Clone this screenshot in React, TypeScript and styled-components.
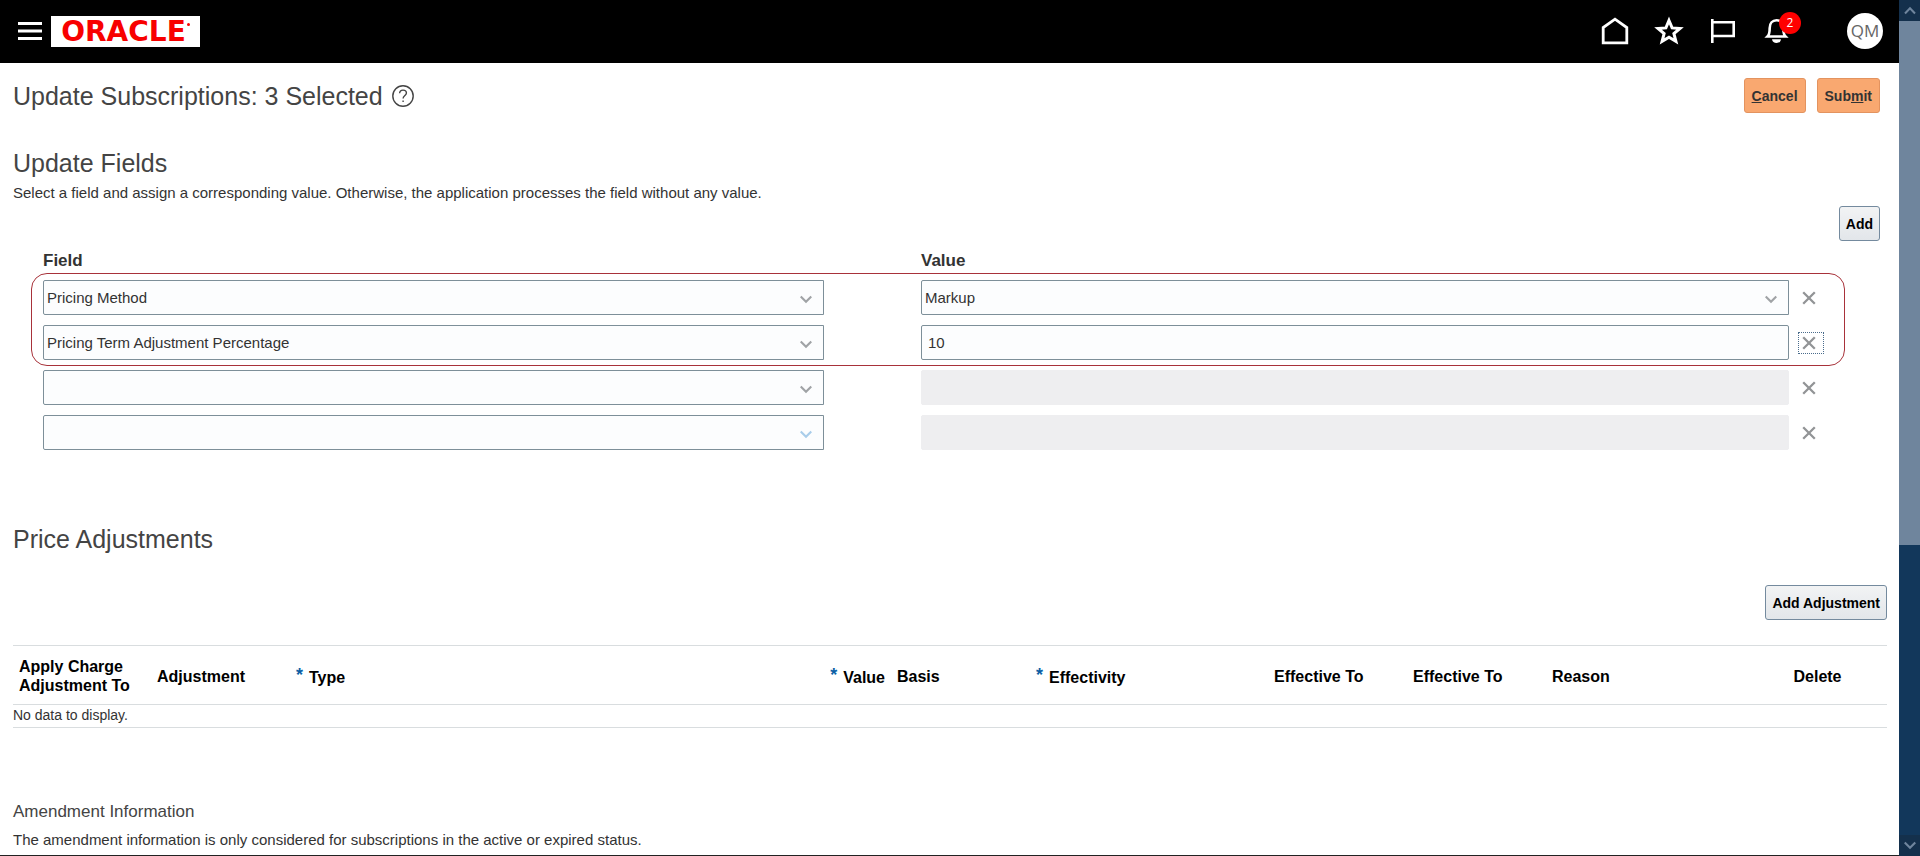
import React from 'react';
import styled, { createGlobalStyle } from 'styled-components';

const GlobalStyle = createGlobalStyle`
  * { box-sizing: border-box; }
  body {
    margin: 0;
    background: #fff;
    color: #333;
    font: 14px/20px "Liberation Sans", Arial, sans-serif;
  }
`;

const Shell = styled.div`
  display: grid;
  grid-template-columns: minmax(0, 1fr) 21px;
  height: 100vh;
  overflow: hidden;
`;

const Page = styled.div`
  min-height: 0;
  overflow: hidden;
  border-bottom: 1px solid #222;
`;

const Header = styled.header`
  display: flex;
  align-items: center;
  height: 63px;
  padding: 0 16px 1px;
  background: #000;
`;

const BareButton = styled.button`
  display: flex;
  align-items: center;
  justify-content: center;
  padding: 0;
  border: 0;
  background: none;
  cursor: pointer;
`;

const MenuButton = styled(BareButton)`
  width: 28px;
  height: 28px;
`;

const Logo = styled.a`
  display: flex;
  align-items: center;
  justify-content: center;
  width: 149px;
  height: 31px;
  margin-left: 7px;
  background: #fff;
  color: #f80000;
  font: bold 28px/31px "DejaVu Sans", Verdana, sans-serif;
  text-decoration: none;
`;

const LogoMark = styled.i`
  align-self: flex-start;
  width: 3px;
  height: 3px;
  margin: 7px 0 0 1px;
  border-radius: 50%;
  background: currentColor;
`;

const Tools = styled.nav`
  display: flex;
  align-items: center;
  gap: 22px;
  margin-left: auto;
`;

const ToolButton = styled(BareButton)`
  position: relative;
  width: 32px;
  height: 32px;
`;

const Badge = styled.span`
  position: absolute;
  top: -3px;
  left: 18px;
  width: 22px;
  height: 22px;
  border-radius: 50%;
  background: #f00;
  color: #fff;
  font: 12px/22px "Open Sans", sans-serif;
  text-align: center;
`;

const Avatar = styled(BareButton)`
  width: 36px;
  height: 36px;
  margin-left: 32px;
  border-radius: 50%;
  background: #fff;
  color: #666;
  font: 17px/36px "Open Sans", sans-serif;
`;

const Main = styled.main`
  padding: 15px 12px 0 13px;
`;

const TitleBar = styled.div`
  display: flex;
  align-items: center;
  gap: 9px;
  padding-right: 7px;
`;

const Heading = styled.h2`
  margin: 0;
  color: #444;
  font-size: 25px;
  font-weight: normal;
  line-height: 32px;
`;

const SubHeading = styled.h3`
  margin: 0;
  color: #444;
  font-size: 17px;
  font-weight: normal;
  line-height: 28px;
`;

const Text = styled.p`
  margin: 0;
  padding: 4px 0 3px;
  font-size: 15px;
`;

const Actions = styled.div<{ $inset?: boolean; $top?: number }>`
  display: flex;
  justify-content: flex-end;
  gap: 11px;
  margin-top: ${(p) => p.$top ?? 0}px;
  margin-left: auto;
  padding-right: ${(p) => (p.$inset ? '7px' : '0')};
`;

const Button = styled.button<{ $accent?: boolean }>`
  height: 35px;
  padding: 0 ${(p) => (p.$accent ? '7px' : '6px')};
  border: 1px solid ${(p) => (p.$accent ? '#e3935f' : '#748a9e')};
  border-radius: 3px;
  background: ${(p) => (p.$accent ? '#f9a870' : 'linear-gradient(#f2f3f4, #e2e6ea)')};
  color: ${(p) => (p.$accent ? '#333' : '#000')};
  font: bold 14px/20px "Liberation Sans", Arial, sans-serif;
  cursor: pointer;
`;

const Section = styled.section<{ $gap: number }>`
  margin-top: ${(p) => p.$gap}px;
`;

const Fields = styled.div`
  margin: 8px 42px 0 18px;
`;

const FieldRow = styled.div`
  display: grid;
  grid-template-columns: minmax(0, 781fr) minmax(0, 956fr) 26px;
  column-gap: 9px;
  align-items: center;

  & > :nth-child(2) {
    margin-left: 88px;
  }
`;

const LabelRow = styled(FieldRow)`
  padding: 0 21px 0 12px;
  font-size: 17px;
  font-weight: bold;
  line-height: 24px;
`;

const Highlight = styled.div`
  display: grid;
  row-gap: 10px;
  padding: 6px 20px 5px 11px;
  border: 1px solid #a8323a;
  border-radius: 16px;
`;

const PlainRows = styled.div`
  display: grid;
  row-gap: 10px;
  padding: 4px 21px 0 12px;
`;

const SelectBox = styled.div`
  position: relative;

  svg {
    position: absolute;
    top: 15px;
    right: 12px;
    pointer-events: none;
  }
`;

const Select = styled.select`
  display: block;
  width: 100%;
  height: 35px;
  padding: 0 32px 0 3px;
  border: 1px solid #7d8f99;
  border-radius: 2px 0 0 2px;
  background: #fcfdfe;
  color: #333;
  font: 15px/20px "Liberation Sans", Arial, sans-serif;
  appearance: none;
`;

const Input = styled.input`
  display: block;
  min-width: 0;
  height: 35px;
  padding: 0 6px;
  border: 1px solid #7d8f99;
  border-radius: 2px;
  background: #fcfdfe;
  color: #333;
  font: 15px/20px "Liberation Sans", Arial, sans-serif;

  &:disabled {
    border-color: #eeeef0;
    background: #eeeef0;
  }
`;

const RemoveButton = styled(BareButton)<{ $focused?: boolean }>`
  justify-content: flex-start;
  width: 26px;
  height: 22px;
  padding-left: 3px;
  border: 1px dotted ${(p) => (p.$focused ? '#4a6c8c' : 'transparent')};
`;

const Table = styled.table`
  width: 100%;
  margin-top: 25px;
  border-collapse: collapse;
  table-layout: fixed;
  border-top: 1px solid #d9dddf;

  th, td {
    border-bottom: 1px solid #d9dddf;
    text-align: left;
  }

  td {
    height: 23px;
    padding: 0;
    line-height: 20px;
    vertical-align: top;
  }
`;

const Th = styled.th<{ $align?: string }>`
  && {
    height: 59px;
    padding: 2px 6px 0;
    color: #000;
    font-size: 16px;
    line-height: 19px;
    text-align: ${(p) => p.$align ?? 'left'};
  }
`;

const Required = styled.span`
  margin-right: 6px;
  color: #0b5fa5;
  font-size: 18px;
  line-height: 19px;
  vertical-align: 2px;
`;

const Scrollbar = styled.div`
  display: flex;
  flex-direction: column;
  background: #12375b;
`;

const ScrollButton = styled(BareButton)`
  height: 21px;
  background: #14304c;
`;

const Thumb = styled.div`
  flex: 0 0 61.2%;
  margin-bottom: auto;
  background: #6f859d;
`;

const Chevron = ({ color = '#a0a3a6' }: { color?: string }) => (
  <svg width="12" height="9" viewBox="0 0 12 9" aria-hidden="true">
    <path d="M0.7 1.5 6 6.8 11.3 1.5" fill="none" stroke={color} strokeWidth="2.2" />
  </svg>
);

type DropdownProps = { label: string; value: string; color?: string };

const Dropdown = ({ label, value, color }: DropdownProps) => (
  <SelectBox>
    <Select aria-label={label} defaultValue={value}>
      <option>{value}</option>
    </Select>
    <Chevron color={color} />
  </SelectBox>
);

const Remove = ({ focused }: { focused?: boolean }) => (
  <RemoveButton $focused={focused} aria-label="Remove field">
    <svg width="14" height="14" viewBox="0 0 14 14" stroke="#929496" strokeWidth="2.3">
      <path d="M1.2 1.2 12.8 12.8M12.8 1.2 1.2 12.8" />
    </svg>
  </RemoveButton>
);

const columns: { name: string; width?: number; required?: boolean; align?: string }[] = [
  { name: 'Apply Charge Adjustment To', width: 138 },
  { name: 'Adjustment', width: 139 },
  { name: 'Type', required: true },
  { name: 'Value', width: 139, required: true, align: 'right' },
  { name: 'Basis', width: 139 },
  { name: 'Effectivity', width: 238, required: true },
  { name: 'Effective To', width: 139 },
  { name: 'Effective To', width: 139 },
  { name: 'Reason', width: 202 },
  { name: 'Delete', width: 139, align: 'center' },
];

export default function App() {
  return (
    <Shell>
      <GlobalStyle />
      <Page>
        <Header>
          <MenuButton aria-label="Navigator">
            <svg width="24" height="18" viewBox="0 0 24 18" stroke="#fff" strokeWidth="3">
              <path d="M0 1.5H24M0 9H24M0 16.5H24" />
            </svg>
          </MenuButton>
          <Logo href="#">
            ORACLE
            <LogoMark />
          </Logo>
          <Tools>
            <ToolButton aria-label="Home">
              <svg width="32" height="32" viewBox="0 0 32 32" fill="none" stroke="#fff" strokeWidth="2.8">
                <path d="M4.2 27.8V12.5L16 4.2 27.8 12.5V27.8Z" />
              </svg>
            </ToolButton>
            <ToolButton aria-label="Favorites">
              <svg width="32" height="32" viewBox="0 0 32 32" fill="none" stroke="#fff" strokeWidth="3">
                <path d="M16 5.5 19.1 12.9 27 13.5 20.9 18.6 22.9 26.3 16 22.2 9.1 26.3 11.1 18.6 5 13.5 12.9 12.9Z" />
              </svg>
            </ToolButton>
            <ToolButton aria-label="Watchlist">
              <svg width="32" height="32" viewBox="0 0 32 32" fill="none" stroke="#fff" strokeWidth="2.6">
                <path d="M5.3 4V28M5.3 7.3H26.7V21H5.3" />
              </svg>
            </ToolButton>
            <ToolButton aria-label="Notifications">
              <svg width="32" height="32" viewBox="0 0 32 32" fill="none" stroke="#fff" strokeWidth="2.6">
                <path d="M6.5 21.5C8.5 19.5 8.7 17.5 8.7 13C8.7 8.5 11.5 5.3 15.5 5.3S22.3 8.5 22.3 13C22.3 17.5 22.5 19.5 24.5 21.5Z" />
                <path d="M11 24.2H20C19.6 26.8 18 28 15.5 28S11.4 26.8 11 24.2Z" fill="#fff" stroke="none" />
              </svg>
              <Badge>2</Badge>
            </ToolButton>
            <Avatar aria-label="Settings and actions">QM</Avatar>
          </Tools>
        </Header>

        <Main>
          <TitleBar>
            <Heading as="h1">Update Subscriptions: 3 Selected</Heading>
            <BareButton aria-label="Help">
              <svg width="22" height="22" viewBox="0 0 22 22" fill="none" stroke="#444" strokeWidth="1.4">
                <circle cx="11" cy="11" r="10.2" />
                <path d="M7.6 8.3C7.7 6.2 9 5.1 11 5.1S14.4 6.3 14.4 8C14.4 10.4 11.1 10.6 11.1 13.6M11.1 15.4V17" />
              </svg>
            </BareButton>
            <Actions>
              <Button $accent><u>C</u>ancel</Button>
              <Button $accent>Sub<u>m</u>it</Button>
            </Actions>
          </TitleBar>

          <Section $gap={34}>
            <Heading>Update Fields</Heading>
            <Text>Select a field and assign a corresponding value. Otherwise, the application processes the field without any value.</Text>
            <Actions $inset>
              <Button>Add</Button>
            </Actions>
            <Fields>
              <LabelRow>
                <span>Field</span>
                <span>Value</span>
              </LabelRow>
              <Highlight>
                <FieldRow>
                  <Dropdown label="Field 1" value="Pricing Method" />
                  <Dropdown label="Value 1" value="Markup" />
                  <Remove />
                </FieldRow>
                <FieldRow>
                  <Dropdown label="Field 2" value="Pricing Term Adjustment Percentage" />
                  <Input aria-label="Value 2" defaultValue="10" />
                  <Remove focused />
                </FieldRow>
              </Highlight>
              <PlainRows>
                <FieldRow>
                  <Dropdown label="Field 3" value="" />
                  <Input aria-label="Value 3" disabled />
                  <Remove />
                </FieldRow>
                <FieldRow>
                  <Dropdown label="Field 4" value="" color="#a9cdea" />
                  <Input aria-label="Value 4" disabled />
                  <Remove />
                </FieldRow>
              </PlainRows>
            </Fields>
          </Section>

          <Section $gap={73}>
            <Heading>Price Adjustments</Heading>
            <Actions $top={30}>
              <Button>Add Adjustment</Button>
            </Actions>
            <Table>
              <colgroup>
                {columns.map((c, i) => (
                  <col key={i} width={c.width} />
                ))}
              </colgroup>
              <thead>
                <tr>
                  {columns.map((c, i) => (
                    <Th key={i} scope="col" $align={c.align}>
                      {c.required && <Required>*</Required>}
                      {c.name}
                    </Th>
                  ))}
                </tr>
              </thead>
              <tbody>
                <tr>
                  <td colSpan={columns.length}>No data to display.</td>
                </tr>
              </tbody>
            </Table>
          </Section>

          <Section $gap={70}>
            <SubHeading>Amendment Information</SubHeading>
            <Text>The amendment information is only considered for subscriptions in the active or expired status.</Text>
          </Section>
        </Main>
      </Page>
      <Scrollbar>
        <ScrollButton aria-label="Scroll up">
          <svg width="12" height="9" viewBox="0 0 12 9"><path d="M1 7.5 6 2.2 11 7.5" fill="none" stroke="#6f859d" strokeWidth="2" /></svg>
        </ScrollButton>
        <Thumb />
        <ScrollButton aria-label="Scroll down">
          <Chevron color="#6f859d" />
        </ScrollButton>
      </Scrollbar>
    </Shell>
  );
}
